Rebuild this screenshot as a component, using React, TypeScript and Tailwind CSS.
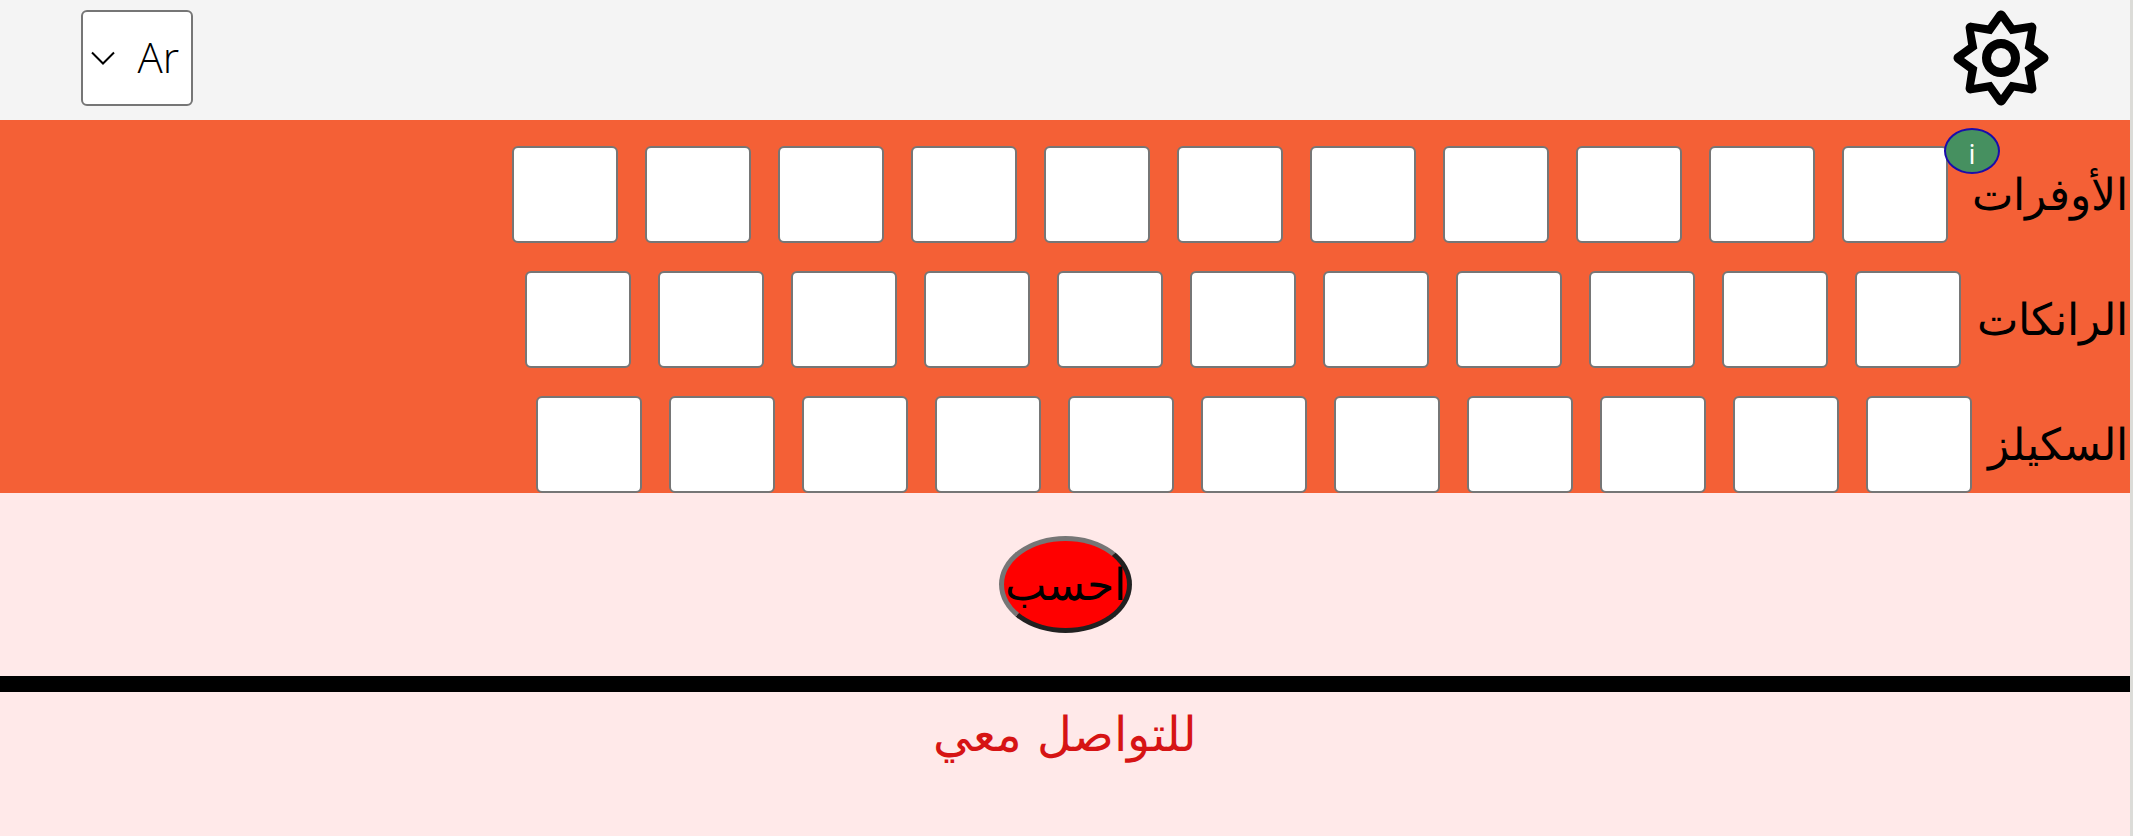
import React from "react";

const rows = [
  { id: "overs", label: "الأوفرات", width: "w-[182px]", info: true },
  { id: "ranks", label: "الرانكات", width: "w-[169px]", info: false },
  { id: "skills", label: "السكيلز", width: "w-[158px]", info: false },
];

function star(tip: number, diagonal: number, notch: number, spread: number) {
  const points: string[] = [];
  for (let k = 0; k < 8; k++) {
    const angle = (k * Math.PI) / 4;
    const r = k % 2 === 0 ? tip : diagonal;
    // notches lean towards the vertical and horizontal tips
    const next = angle + (k % 2 === 0 ? spread : Math.PI / 4 - spread);
    points.push(`${r * Math.sin(angle)},${-r * Math.cos(angle)}`);
    points.push(`${notch * Math.sin(next)},${-notch * Math.cos(next)}`);
  }
  return points.join(" ");
}

function Gear() {
  return (
    <svg viewBox="-48 -48 96 96" className="size-24" aria-hidden="true">
      <polygon points={star(42.5, 43, 29.5, 0.377)} fill="#000" stroke="#000" strokeWidth="10" strokeLinejoin="round" />
      <polygon points={star(37, 38, 25.5, 0.381)} fill="#f4f4f4" />
      <circle r="14.5" fill="none" stroke="#000" strokeWidth="9" />
    </svg>
  );
}

export default function App() {
  return (
    <div className="flex min-h-screen bg-white font-['DejaVu_Sans','Noto_Sans',sans-serif] font-extralight text-black">
      <main dir="rtl" className="min-w-0 flex-1 bg-[#ffe9e9]">
        <header className="flex h-30 items-center justify-between bg-[#f4f4f4] px-[81px] pb-1">
          <button type="button" aria-label="الإعدادات" className="flex">
            <Gear />
          </button>
          <div className="grid items-center">
            <select
              aria-label="اللغة"
              defaultValue="ar"
              className="col-start-1 row-start-1 h-24 w-28 appearance-none rounded-md border-2 border-[#767676] bg-white ps-3 pb-1 font-['Open_Sans',sans-serif] text-[42px] font-light"
            >
              <option value="ar">Ar</option>
              <option value="en">En</option>
            </select>
            <svg viewBox="0 0 24 14" className="pointer-events-none col-start-1 row-start-1 me-[10px] h-[14px] w-6 justify-self-end" aria-hidden="true">
              <path d="M1 1.5 12 12.5 23 1.5" fill="none" stroke="#000" strokeWidth="2" />
            </svg>
          </div>
        </header>

        <form onSubmit={(e) => e.preventDefault()}>
          <div className="flex flex-col gap-7 bg-[#f46036] pt-[26px]">
            {rows.map((row) => (
              <div key={row.id} className="relative flex items-center">
                <label htmlFor={`${row.id}-0`} className={`${row.width} shrink-0 pt-px pr-[2px] text-[44px] leading-none whitespace-nowrap`}>
                  {row.label}
                </label>
                {row.info && (
                  <button
                    type="button"
                    className="absolute -top-[18px] right-[130px] flex h-[46px] w-14 items-center justify-center rounded-[50%] border-2 border-[#1a0dab] bg-[#469060] pt-1 font-['Open_Sans',sans-serif] text-[28px] leading-none font-medium text-white"
                  >
                    i
                  </button>
                )}
                <div className="flex gap-[27px]">
                  {Array.from({ length: 11 }, (_, i) => (
                    <input
                      key={i}
                      id={`${row.id}-${i}`}
                      type="text"
                      aria-label={`${row.label} ${i + 1}`}
                      className="h-[97px] w-[106px] rounded-md border-2 border-[#767676] bg-white px-2 text-[40px]"
                    />
                  ))}
                </div>
              </div>
            ))}
          </div>
          <div className="flex justify-center py-[43px]">
            <button
              type="submit"
              className="flex h-[97px] w-[133px] items-center justify-center rounded-[50%] border-[5px] border-t-[#767676] border-r-[#212121] border-b-[#212121] border-l-[#767676] bg-[#ff0000] text-[44px] leading-none whitespace-nowrap"
            >
              احسب
            </button>
          </div>
        </form>

        <hr className="h-4 border-0 bg-black" />
        <footer className="pt-4 text-center text-[48px] leading-[52px] text-[#d61414]">
          <h2>للتواصل معي</h2>
        </footer>
      </main>
      <div className="w-[3px] bg-[#dcdcd8]" />
      <div className="w-[9px] bg-white" />
    </div>
  );
}
